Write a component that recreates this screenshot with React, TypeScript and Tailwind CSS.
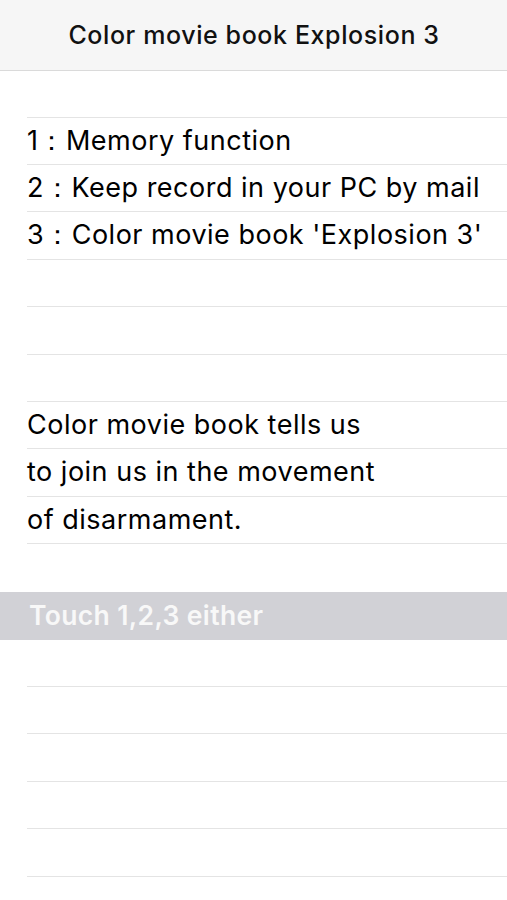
import React from "react";

const font = { fontFamily: "Inter, 'Noto Sans', sans-serif" };

function Row({ text, line = true, first = false }: { text?: string; line?: boolean; first?: boolean }) {
  return (
    <div className={first ? "h-[46.7px] pl-[27px]" : "h-[47.4px] pl-[27px]"}>
      <div
        className={
          "h-full flex items-center text-[27px] text-black tracking-[0.5px] " +
          (line ? "border-b border-[#e4e4e4]" : "")
        }
      >
        {text}
      </div>
    </div>
  );
}

export default function App() {
  return (
    <div className="w-[507px] h-[900px] bg-white overflow-hidden" style={font}>
      <div className="h-[71px] bg-[#f6f6f6] border-b-[1.5px] border-[#dadada] flex items-center justify-center">
        <span className="text-[25px] font-medium text-[#111] tracking-[0.6px] pl-[1px] pt-[1px]">Color movie book Explosion 3</span>
      </div>
      <Row first />
      <Row text="1：Memory function" />
      <Row text="2：Keep record in your PC by mail" />
      <Row text="3：Color movie book 'Explosion 3'" />
      <Row />
      <Row />
      <Row />
      <Row text="Color movie book tells us" />
      <Row text="to join us in the movement" />
      <Row text="of disarmament." />
      <Row line={false} />
      <div className="h-[48px] bg-[#d1d1d6] flex items-center pl-[29px]">
        <span className="text-[26.5px] font-semibold text-[#f8f8f8] tracking-[0.35px]">Touch 1,2,3 either</span>
      </div>
      <Row />
      <Row />
      <Row />
      <Row />
      <Row />
    </div>
  );
}
